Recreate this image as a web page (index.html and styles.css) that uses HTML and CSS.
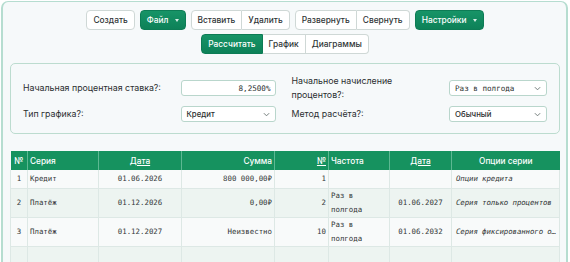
FILE: index.html
```html
<!DOCTYPE html>
<html lang="ru">
<head>
    <meta charset="UTF-8">
    <title>Кредитный калькулятор</title>
    <link rel="stylesheet" href="styles.css">
</head>
<body>

<div class="app">
    <div class="toolbar">
        <div class="row">
            <button class="btn">Создать</button>
            <button class="btn primary">Файл <span class="caret"></span></button>
            <div class="group">
                <button class="btn">Вставить</button>
                <button class="btn">Удалить</button>
            </div>
            <div class="group">
                <button class="btn">Развернуть</button>
                <button class="btn">Свернуть</button>
            </div>
            <button class="btn primary">Настройки <span class="caret"></span></button>
        </div>
        <div class="row">
            <div class="group">
                <button class="btn primary">Рассчитать</button>
                <button class="btn">График</button>
                <button class="btn">Диаграммы</button>
            </div>
        </div>
    </div>

    <div class="settings">
        <label class="label">Начальная процентная ставка?:</label>
        <div class="field mono right">8,2500%</div>
        <label class="label">Начальное начисление<br>процентов?:</label>
        <div class="field select mono">Раз в полгода <svg class="chev" viewBox="0 0 8 5"><path d="M1 1l3 3 3-3" /></svg></div>

        <label class="label">Тип графика?:</label>
        <div class="field select">Кредит <svg class="chev" viewBox="0 0 8 5"><path d="M1 1l3 3 3-3" /></svg></div>
        <label class="label">Метод расчёта?:</label>
        <div class="field select">Обычный <svg class="chev" viewBox="0 0 8 5"><path d="M1 1l3 3 3-3" /></svg></div>
    </div>

    <table class="schedule">
        <colgroup>
            <col style="width: 17px">
            <col style="width: 71px">
            <col style="width: 83px">
            <col style="width: 93px">
            <col style="width: 54px">
            <col style="width: 61px">
            <col style="width: 62px">
            <col>
        </colgroup>
        <thead>
            <tr>
                <th class="c">№</th>
                <th>Серия</th>
                <th class="c"><u>Дата</u></th>
                <th class="r">Сумма</th>
                <th class="r"><u>№</u></th>
                <th>Частота</th>
                <th class="c"><u>Дата</u></th>
                <th class="c">Опции серии</th>
            </tr>
        </thead>
        <tbody>
            <tr class="short">
                <td class="c">1</td>
                <td>Кредит</td>
                <td class="c">01.06.2026</td>
                <td class="r">800 000,00₽</td>
                <td class="r">1</td>
                <td></td>
                <td></td>
                <td class="opt">Опции кредита</td>
            </tr>
            <tr>
                <td class="c">2</td>
                <td>Платёж</td>
                <td class="c">01.12.2026</td>
                <td class="r">0,00₽</td>
                <td class="r">2</td>
                <td>Раз в полгода</td>
                <td class="c">01.06.2027</td>
                <td class="opt">Серия только процентов</td>
            </tr>
            <tr>
                <td class="c">3</td>
                <td>Платёж</td>
                <td class="c">01.12.2027</td>
                <td class="r">Неизвестно</td>
                <td class="r">10</td>
                <td>Раз в полгода</td>
                <td class="c">01.06.2032</td>
                <td class="opt">Серия фиксированного основного долга</td>
            </tr>
            <tr>
                <td></td>
                <td></td>
                <td></td>
                <td></td>
                <td></td>
                <td></td>
                <td></td>
                <td></td>
            </tr>
        </tbody>
    </table>
</div>

</body>
</html>
```

FILE: styles.css
```css
body {
    margin: 0;
    padding: 1px 0 0 1px;
    font-family: Inter, "Noto Sans", sans-serif;
    color: #2b2f30;
    background-color: #ffffff;
    overflow: hidden;
}

.app {
    width: 567px;
    height: 300px;
    border: 1px solid #b6ddd0;
    border-left-width: 2px;
    border-right-width: 2px;
    border-radius: 7px;
    background-color: #f6f9fa;
    padding: 8px 6px 0 7px;
    box-sizing: border-box;
}

.toolbar {
    display: flex;
    flex-direction: column;
    align-items: center;
    gap: 4px;
}

.toolbar .row {
    display: flex;
    gap: 5px;
}

.btn {
    height: 20px;
    padding: 0 6px;
    font-family: Inter, "Noto Sans", sans-serif;
    font-size: 8.4px;
    font-weight: 500;
    color: #2f3536;
    background-color: #ffffff;
    border: 1px solid #cfd8d6;
    border-radius: 4px;
    display: flex;
    align-items: center;
    gap: 6px;
    cursor: pointer;
}

.btn.primary {
    color: #ffffff;
    background: linear-gradient(#179467, #0d8158);
    border-color: #0d7c55;
}

.caret {
    width: 0;
    height: 0;
    border-left: 2.5px solid transparent;
    border-right: 2.5px solid transparent;
    border-top: 3px solid #d8efe6;
}

.group {
    display: flex;
}

.group .btn {
    border-radius: 0;
}

.group .btn + .btn {
    border-left: none;
}

.group .btn:first-child {
    border-radius: 4px 0 0 4px;
}

.group .btn:last-child {
    border-radius: 0 4px 4px 0;
}

.settings {
    margin-top: 9px;
    padding: 10px 12px 11px 12px;
    border: 1px solid #bcdccf;
    border-radius: 5px;
    display: grid;
    grid-template-columns: 1fr 95px 1fr 98px;
    grid-template-rows: 28px 16px;
    column-gap: 16px;
    row-gap: 4px;
    align-items: center;
}

.label {
    font-size: 8.8px;
    line-height: 14px;
    color: #2b2f30;
}

.field {
    height: 16px;
    box-sizing: border-box;
    border: 1px solid #b9d6cc;
    border-radius: 3px;
    background-color: #ffffff;
    font-size: 7.8px;
    font-weight: 500;
    padding: 0 5px;
    display: flex;
    align-items: center;
    justify-content: space-between;
}

.field.right {
    justify-content: flex-end;
    padding-right: 4px;
}

.mono {
    font-family: "DejaVu Sans Mono", monospace;
    font-size: 7.6px;
    font-weight: normal;
}

.chev {
    width: 7px;
    height: 5px;
    fill: none;
    stroke: #6f7a78;
    stroke-width: 1.1;
}

.schedule {
    margin-top: 17px;
    width: 550px;
    table-layout: fixed;
    border-collapse: collapse;
    font-family: "DejaVu Sans Mono", monospace;
    font-size: 7.4px;
}

.schedule th {
    height: 19px;
    padding: 0 2px;
    background-color: #16925f;
    color: #ffffff;
    font-family: Inter, "Noto Sans", sans-serif;
    font-size: 8.3px;
    font-weight: 500;
    text-align: left;
    border-left: 1px solid #5cb892;
}

.schedule th:first-child {
    border-left: none;
}

.schedule td {
    height: 28px;
    padding: 0 2px;
    line-height: 14px;
    color: #333738;
    border: 1px solid #dde8e5;
    border-top: none;
    white-space: normal;
}

.schedule tr.short td {
    height: 18px;
}

.schedule tbody tr:nth-child(odd) td {
    background-color: #f8fafa;
}

.schedule tbody tr:nth-child(even) td {
    background-color: #edf4f1;
}

.schedule .c { text-align: center; }
.schedule .r { text-align: right; }

.schedule td.opt {
    font-style: italic;
    padding-left: 4px;
    padding-right: 1px;
    letter-spacing: -0.1px;
    white-space: nowrap;
    overflow: hidden;
    text-overflow: ellipsis;
}
```
